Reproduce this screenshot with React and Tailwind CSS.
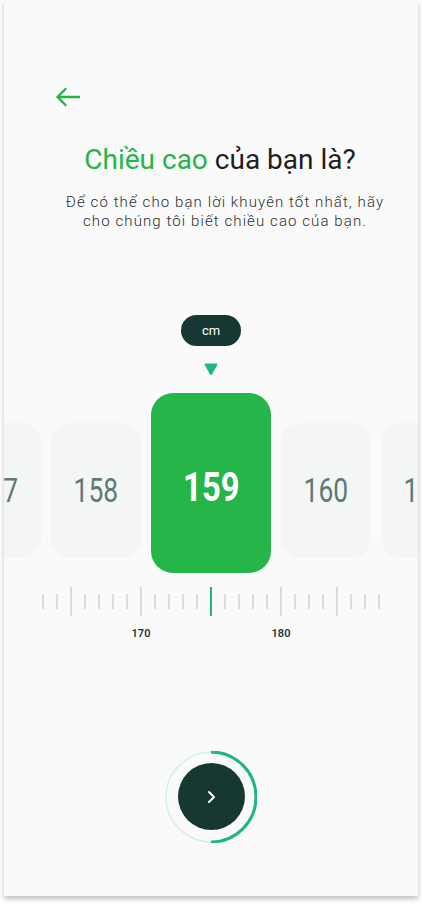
import React from 'react';

const sideLeft = ['157', '158'];
const sideRight = ['160', '161'];

const ticks = Array.from({ length: 25 }, (_, i) => i);
const longTicks = [2, 7, 17, 21];

const SideCard = ({ value }) => (
    <div className="mt-[30px] shrink-0 w-[90px] h-[135px] rounded-[20px] bg-[#f3f6f5] flex items-center justify-center text-[33px] text-[#5d7a75]">
        <span className="inline-block scale-x-[0.8]">{value}</span>
    </div>
);

const App = () => {
    return (
        <div className="min-h-screen bg-white" style={{ fontFamily: 'Roboto, "Noto Sans", sans-serif' }}>
            <div className="ml-[4px] w-[414px] h-[896px] bg-[#fafafa] shadow-[0_3px_5px_rgba(0,0,0,0.25)] overflow-hidden flex flex-col">
                {/* Back */}
                <div className="pt-[87px] pl-[50px]">
                    <svg width="28" height="20" viewBox="0 0 28 20" fill="none" stroke="#25b44a" strokeWidth="2.4" strokeLinecap="round" strokeLinejoin="round">
                        <path d="M25 10H3.5M11.5 2L3.5 10L11.5 18" />
                    </svg>
                </div>

                {/* Heading */}
                <h1 className="mt-[35px] pl-[18px] text-center text-[28px] leading-[36px] text-[#1f1f1f]">
                    <span className="text-[#25b44a]">Chiều cao</span> của bạn là?
                </h1>
                <p className="mt-[15px] pl-[28px] text-center text-[15px] leading-[19px] font-light tracking-[1.1px] text-[#2e2e2e]">
                    Để có thể cho bạn lời khuyên tốt nhất, hãy
                    <br />
                    cho chúng tôi biết chiều cao của bạn.
                </p>

                {/* Unit */}
                <div className="mt-[84px] flex flex-col items-center">
                    <div className="h-[31px] w-[60px] rounded-full bg-[#173832] flex items-center justify-center text-[13px] text-white">
                        cm
                    </div>
                    <svg className="mt-[16px]" width="16" height="14" viewBox="0 0 16 14">
                        <path d="M2.5 1.5H13.5Q15 1.5 14.2 3L9.3 12Q8 14 6.7 12L1.8 3Q1 1.5 2.5 1.5Z" fill="#1db685" />
                    </svg>
                </div>

                {/* Picker */}
                <div className="mt-[17px] flex justify-center items-start gap-[10px]">
                    {sideLeft.map((v) => (
                        <SideCard key={v} value={v} />
                    ))}
                    <div className="shrink-0 w-[120px] h-[180px] rounded-[22px] bg-[#25b548] flex items-center justify-center text-[41px] font-bold text-white pt-[10px]">
                        <span className="inline-block scale-x-[0.8]">159</span>
                    </div>
                    {sideRight.map((v) => (
                        <SideCard key={v} value={v} />
                    ))}
                </div>

                {/* Ruler */}
                <div className="mt-[14px] h-[29px] flex justify-center items-center gap-[12px]">
                    {ticks.map((i) => (
                        <div
                            key={i}
                            className={
                                i === 12
                                    ? 'w-[2px] h-[29px] bg-[#1db685]'
                                    : longTicks.includes(i)
                                        ? 'w-[2px] h-[29px] bg-[#d9dcdb]'
                                        : 'w-[2px] h-[15px] bg-[#d9dcdb]'
                            }
                        />
                    ))}
                </div>
                <div className="mt-[10px] flex justify-center gap-[100px] text-[11px] font-semibold text-[#263533]">
                    <span className="w-[40px] text-center">170</span>
                    <span className="w-[40px] text-center">180</span>
                </div>

                {/* Next */}
                <div className="mt-[108px] flex justify-center">
                    <div className="relative w-[92px] h-[92px] flex items-center justify-center">
                        <svg className="absolute inset-0" width="92" height="92" viewBox="0 0 92 92">
                            <circle cx="46" cy="46" r="45" fill="none" stroke="#d3f0e6" strokeWidth="1.5" />
                            <path d="M46 1A45 45 0 0 1 46 91" fill="none" stroke="#1db685" strokeWidth="3" />
                        </svg>
                        <button className="w-[67px] h-[67px] rounded-full bg-[#173832] flex items-center justify-center">
                            <svg width="12" height="14" viewBox="0 0 12 14" fill="none" stroke="white" strokeWidth="2" strokeLinecap="round" strokeLinejoin="round">
                                <path d="M4 2L9 7L4 12" />
                            </svg>
                        </button>
                    </div>
                </div>
            </div>
        </div>
    );
};

export default App;
